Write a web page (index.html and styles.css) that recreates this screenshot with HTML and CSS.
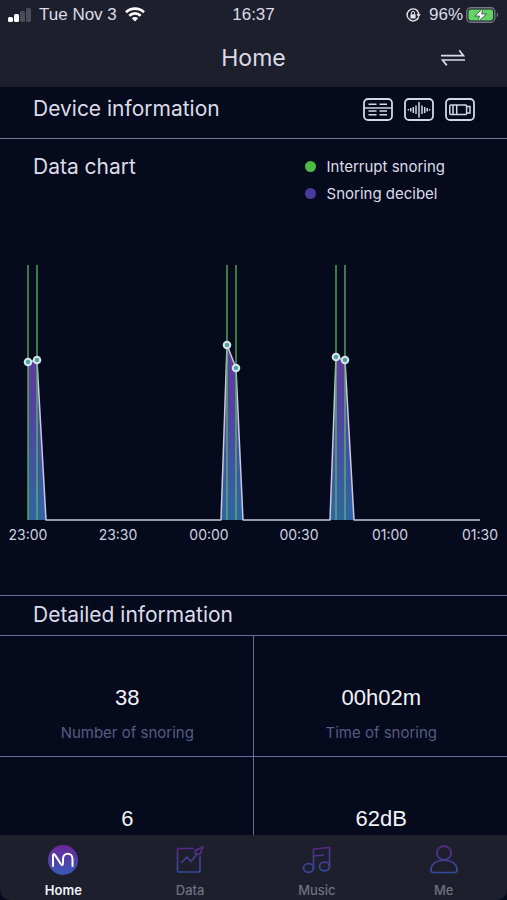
FILE: index.html
```html
<!DOCTYPE html>
<html lang="en">
<head>
    <meta charset="UTF-8">
    <meta name="viewport" content="width=device-width, initial-scale=1.0">
    <title>Home</title>
    <link rel="stylesheet" href="styles.css">
</head>
<body>
    <header class="header">
        <div class="status-bar">
            <div class="status-left">
                <svg class="signal" viewBox="0 0 23 14" width="23" height="14">
                    <rect x="0" y="9" width="5" height="5" rx="1.5" fill="#fff"/>
                    <rect x="6" y="6" width="5" height="8" rx="1.5" fill="#fff"/>
                    <rect x="12" y="3" width="5" height="11" rx="1.5" fill="#4b4c59"/>
                    <rect x="18" y="0" width="5" height="14" rx="1.5" fill="#4b4c59"/>
                </svg>
                <span>Tue Nov 3</span>
                <svg class="wifi" viewBox="0 0 20 15" width="20" height="15">
                    <g fill="none" stroke="#fff" stroke-width="2.6">
                        <path d="M1 5.3C6 .4 14 .4 19 5.3"/>
                        <path d="M4.3 8.7C7.6 5.6 12.4 5.6 15.7 8.7"/>
                    </g>
                    <path d="M10 14.6L6.8 11.3C8.5 9.7 11.5 9.7 13.2 11.3Z" fill="#fff"/>
                </svg>
            </div>
            <time class="status-time">16:37</time>
            <div class="status-right">
                <svg class="lock" viewBox="0 0 15 14" width="15" height="14">
                    <path d="M11.7 3A6 6 0 1 0 12.6 9.4" fill="none" stroke="#e6e6ee" stroke-width="1.4"/>
                    <path d="M10.4 6.2H14.8L12.6 9.2Z" fill="#e6e6ee"/>
                    <path d="M12.6 7A6 6 0 0 0 11.3 2.7" fill="none" stroke="#e6e6ee" stroke-width="1.4"/>
                    <rect x="4.4" y="6.2" width="5.2" height="4.2" rx=".6" fill="#e6e6ee"/>
                    <path d="M5.4 6.4V5A1.6 1.6 0 0 1 8.6 5V6.4" fill="none" stroke="#e6e6ee"/>
                </svg>
                <span>96%</span>
                <svg class="battery" viewBox="0 0 33 16" width="33" height="16">
                    <rect x=".8" y=".8" width="28" height="14.4" rx="4" fill="none" stroke="#767782" stroke-width="1.4"/>
                    <rect x="2.5" y="2.5" width="24.6" height="11" rx="2.4" fill="#62d465"/>
                    <path d="M30.8 5.5A3 3 0 0 1 30.8 10.5Z" fill="#767782"/>
                    <path d="M16.8 1.2L8.8 9H13.4L12.2 14.8L20.6 7H15.8Z" fill="#fff" stroke="#2a4a38" stroke-width=".8"/>
                </svg>
            </div>
        </div>
        <div class="title-bar">
            <h1>Home</h1>
            <button type="button" class="switch" aria-label="Switch device">
                <svg viewBox="0 0 24 18" width="24" height="18" fill="none" stroke="#dcdce8" stroke-width="1.7">
                    <path d="M0 6.7H22.5L18.2 1.2"/>
                    <path d="M24 11H1.5L5.8 16.4"/>
                </svg>
            </button>
        </div>
    </header>

    <main class="content">
        <section class="device">
            <h2>Device information</h2>
            <div class="device-icons">
                <svg viewBox="0 0 30 23" width="30" height="23" fill="none" stroke="#d5d6e6">
                    <rect x="1" y="1" width="28" height="21" rx="4" stroke-width="1.8"/>
                    <path d="M1 10H29" stroke-width="1.5"/>
                    <path d="M5.5 6.3H13.5M16.5 6.3H24M5.5 13H13.5M16.5 13H24M5.5 16.7H13.5M16.5 16.7H24" stroke-width="1.6"/>
                </svg>
                <svg viewBox="0 0 30 23" width="30" height="23" fill="none" stroke="#d5d6e6">
                    <rect x="1" y="1" width="28" height="21" rx="4" stroke-width="1.8"/>
                    <path d="M15 4V19.5M12 7.5V16M9.3 9V15M6.8 10V13.5M18 7.5V16M20.7 9V15M23.2 10V13.5M4.4 11V12.5M25.6 11V12.5" stroke-width="1.5"/>
                </svg>
                <svg viewBox="0 0 30 23" width="30" height="23" fill="none" stroke="#d5d6e6">
                    <rect x="1" y="1" width="28" height="21" rx="4" stroke-width="1.8"/>
                    <rect x="4.8" y="7" width="16.8" height="9.5" rx="1" stroke-width="1.5"/>
                    <path d="M21.6 8.5H25V15H21.6M8 7V16.5M11.7 7V16.5" stroke-width="1.5"/>
                </svg>
            </div>
        </section>

        <section class="chart">
            <div class="chart-head">
                <h2>Data chart</h2>
                <ul class="legend">
                    <li><span class="dot dot-green"></span>Interrupt snoring</li>
                    <li><span class="dot dot-purple"></span>Snoring decibel</li>
                </ul>
            </div>
            <svg class="plot" viewBox="0 0 507 290">
                <defs>
                    <linearGradient id="area" gradientUnits="userSpaceOnUse" x1="0" y1="85" x2="0" y2="260">
                        <stop offset="0" stop-color="#64399f"/>
                        <stop offset=".35" stop-color="#51439f"/>
                        <stop offset="1" stop-color="#3065a3"/>
                    </linearGradient>
                </defs>
                <g fill="url(#area)">
                    <path d="M28 102L37 100L46 260H28Z"/>
                    <path d="M221 260L227 85L236 108L243 260Z"/>
                    <path d="M330 260L336 97L345 100L354 260Z"/>
                </g>
                <path class="line" d="M28 102L37 100L46 260H221L227 85L236 108L243 260H330L336 97L345 100L354 260H480"/>
                <path class="marks" d="M28 5V260M37 5V260M227 5V260M236 5V260M336 5V260M345 5V260"/>
                <g class="points">
                    <circle cx="28" cy="102" r="3.3"/>
                    <circle cx="37" cy="100" r="3.3"/>
                    <circle cx="227" cy="85" r="3.3"/>
                    <circle cx="236" cy="108" r="3.3"/>
                    <circle cx="336" cy="97" r="3.3"/>
                    <circle cx="345" cy="100" r="3.3"/>
                </g>
                <g class="axis">
                    <text x="28" y="280">23:00</text>
                    <text x="118" y="280">23:30</text>
                    <text x="209" y="280">00:00</text>
                    <text x="299" y="280">00:30</text>
                    <text x="390" y="280">01:00</text>
                    <text x="480" y="280">01:30</text>
                </g>
            </svg>
        </section>

        <section class="details">
            <h2>Detailed information</h2>
            <div class="stats">
                <div class="stat">
                    <strong>38</strong>
                    <span>Number of snoring</span>
                </div>
                <div class="stat">
                    <strong>00h02m</strong>
                    <span>Time of snoring</span>
                </div>
                <div class="stat">
                    <strong>6</strong>
                </div>
                <div class="stat">
                    <strong>62dB</strong>
                </div>
            </div>
        </section>
    </main>

    <nav class="tabs">
        <a href="#home" class="tab active">
            <svg viewBox="0 0 30 30" width="30" height="30" fill="none">
                <defs>
                    <linearGradient id="tabFill" gradientUnits="userSpaceOnUse" x1="0" y1="2" x2="0" y2="28">
                        <stop offset="0" stop-color="#662b9b"/>
                        <stop offset="1" stop-color="#3a57b8"/>
                    </linearGradient>
                </defs>
                <circle cx="15" cy="15" r="15" fill="url(#tabFill)"/>
                <path d="M5 21V10.5Q5 8 7 10L12.5 18.5Q15 22 15 18V14C15 7 24.5 7 24.5 14V21" stroke="#fff" stroke-width="2" stroke-linecap="round"/>
            </svg>
            <span>Home</span>
        </a>
        <a href="#data" class="tab">
            <svg viewBox="0 0 30 30" width="30" height="30" fill="none" stroke="url(#tabFill)" stroke-width="1.7" stroke-linejoin="round" stroke-linecap="round">
                <path d="M18 3.5H4Q2.5 3.5 2.5 5V25.5Q2.5 27 4 27H23.5Q25 27 25 25.5V11"/>
                <path d="M6.5 17.5L12 12L16 16.5L22 9"/>
                <path d="M28 1.5L20.5 5.5L20.2 8.3L23 9.5L25.5 8.5Z"/>
            </svg>
            <span>Data</span>
        </a>
        <a href="#music" class="tab">
            <svg viewBox="0 0 30 30" width="30" height="30" fill="none" stroke="url(#tabFill)" stroke-width="1.7" stroke-linejoin="round" stroke-linecap="round">
                <ellipse cx="6.5" cy="23" rx="5" ry="4.3"/>
                <ellipse cx="22.5" cy="21.5" rx="5" ry="4.3"/>
                <path d="M11.5 23V4L27.5 2.5V21.5M11.5 11L21.5 10"/>
            </svg>
            <span>Music</span>
        </a>
        <a href="#me" class="tab">
            <svg viewBox="0 0 30 30" width="30" height="30" fill="none" stroke="url(#tabFill)" stroke-width="1.7" stroke-linejoin="round">
                <ellipse cx="15" cy="8" rx="7.2" ry="6.8"/>
                <path d="M9.5 16Q15 14.4 20.5 16C25.5 17.8 28.2 21.5 28.2 25Q28 27.5 25.5 27.5H4.5Q2 27.5 1.8 25C1.8 21.5 4.5 17.8 9.5 16Z"/>
            </svg>
            <span>Me</span>
        </a>
    </nav>
</body>
</html>
```

FILE: styles.css
```css
* {
    box-sizing: border-box;
}
body {
    margin: 0;
    height: 100vh;
    display: flex;
    flex-direction: column;
    background: #050a1d;
    color: #dcdce8;
    font-family: Inter, "Liberation Sans", sans-serif;
}
h1, h2 {
    margin: 0;
    font-weight: 400;
}
h2 {
    font-size: 21px;
    line-height: 28px;
}
svg {
    display: block;
}
.header {
    background: #1e1f2d;
}
.status-bar {
    display: grid;
    grid-template-columns: 1fr auto 1fr;
    align-items: center;
    height: 29px;
    padding: 0 8px;
    font-family: "Liberation Sans", Arial, sans-serif;
    font-size: 17px;
}
.status-left, .status-right {
    display: flex;
    align-items: center;
    gap: 8px;
}
.status-right {
    justify-content: flex-end;
}
.battery {
    margin-left: -5px;
}
.title-bar {
    display: grid;
    grid-template-columns: 1fr auto 1fr;
    align-items: center;
    height: 58px;
    padding: 0 42px;
}
h1 {
    grid-column: 2;
    font-size: 23px;
    line-height: 30px;
}
.switch {
    justify-self: end;
    padding: 0;
    border: none;
    background: none;
    cursor: pointer;
}
.content {
    flex: 1;
    min-height: 0;
    overflow: hidden;
}
.device {
    display: flex;
    justify-content: space-between;
    padding: 8px 32px 15px 33px;
    border-bottom: 1px solid #737798;
}
.device-icons {
    display: flex;
    align-items: center;
    height: 28px;
    gap: 11px;
}
.chart {
    padding-bottom: 45px;
}
.chart-head {
    display: flex;
    justify-content: space-between;
    padding: 14px 62px 0 33px;
}
.legend {
    list-style: none;
    margin: 0;
    padding: 0;
    font-size: 15px;
    line-height: 27px;
}
.legend li {
    display: flex;
    align-items: center;
    gap: 11px;
}
.dot {
    width: 11px;
    height: 11px;
    border-radius: 50%;
}
.dot-green {
    background: #4cba46;
}
.dot-purple {
    background: #4b3a9f;
}
.plot {
    width: 100%;
    margin-top: 53px;
}
.line {
    fill: none;
    stroke: #c8c8de;
    stroke-width: 1.5;
    stroke-linejoin: round;
}
.marks {
    stroke: #5dbb62;
    stroke-width: 1.6;
    opacity: 0.8;
}
.points circle {
    fill: #55a39a;
    stroke: #d5e6ee;
    stroke-width: 2;
}
.axis text {
    fill: #d2d2e0;
    font-size: 14px;
    text-anchor: middle;
}
.details h2 {
    padding: 5px 33px 6px;
    border-top: 1px solid #666b98;
    border-bottom: 1px solid #666b98;
}
.stats {
    display: grid;
    grid-template-columns: 1fr 1fr;
}
.stat {
    display: flex;
    flex-direction: column;
    align-items: center;
    height: 121px;
    padding: 48px 0 0 2px;
    gap: 7px;
    border-bottom: 1px solid #666b98;
}
.stat:nth-child(odd) {
    border-right: 1px solid #666b98;
}
.stat strong {
    color: #f2f2f8;
    font-family: "Liberation Sans", Arial, sans-serif;
    font-size: 22px;
    font-weight: 400;
    line-height: 28px;
}
.stat span {
    color: #575b80;
    font-size: 15px;
    line-height: 27px;
}
.tabs {
    display: grid;
    grid-template-columns: repeat(4, 1fr);
    height: 65px;
    background: #1e1f2d;
    border-radius: 0 0 10px 10px;
}
.tab {
    display: flex;
    flex-direction: column;
    align-items: center;
    padding-top: 10px;
    gap: 6px;
    color: #6f7080;
    font-size: 13px;
    font-weight: 500;
    line-height: 18px;
    text-decoration: none;
}
.tab svg {
    opacity: 0.8;
}
.tab.active {
    color: #f2f2f8;
    font-weight: 600;
}
.tab.active svg {
    opacity: 1;
}
```
